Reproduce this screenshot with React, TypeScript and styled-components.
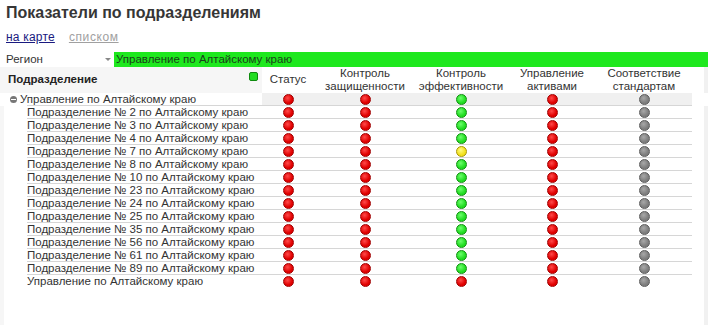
import styled, { createGlobalStyle } from 'styled-components';

const GlobalStyle = createGlobalStyle`
  html, body {
    margin: 0;
    padding: 0;
    background: #ffffff;
  }
  body {
    font-family: "Liberation Sans", Arial, sans-serif;
    font-size: 11px;
    color: #222;
  }
`;

const Page = styled.div`
  width: 708px;
  height: 325px;
  overflow: hidden;
  display: flex;
  flex-direction: column;
`;

const Title = styled.h1`
  margin: 0;
  padding: 3px 6px 0;
  height: 22px;
  box-sizing: border-box;
  font-family: "Liberation Sans", Arial, sans-serif;
  font-size: 16px;
  line-height: 20px;
  font-weight: bold;
  color: #363636;
`;

const Tabs = styled.div`
  display: flex;
  gap: 14px;
  padding: 8px 6px 0;
  height: 24px;
  box-sizing: border-box;
  line-height: 14px;
`;

const Tab = styled.a<{ $active?: boolean }>`
  color: ${(p) => (p.$active ? '#1a1a80' : '#a0a0a0')};
  text-decoration: underline;
  font-size: 12px;
  letter-spacing: ${(p) => (p.$active ? '0.2px' : '0.6px')};
  cursor: pointer;
`;

const FilterRow = styled.div`
  display: flex;
  height: 15px;
  margin-top: 6px;
  line-height: 15px;
`;

const Select = styled.div`
  width: 114px;
  padding-left: 6px;
  box-sizing: border-box;
  display: flex;
  justify-content: space-between;
  align-items: center;
  color: #333;
  font-size: 11.5px;
`;

const Arrow = styled.span`
  width: 0;
  height: 0;
  margin-right: 3px;
  border-left: 3px solid transparent;
  border-right: 3px solid transparent;
  border-top: 3px solid #888;
`;

const Selected = styled.div`
  flex: 1;
  background: #1ee81e;
  color: #1b3d1b;
  padding-left: 2px;
  font-size: 11.5px;
`;

const Table = styled.div`
  flex: 1;
  box-shadow: inset 4px 0 0 #f6f6f6, inset -4px 0 0 #f1f1f1;
`;

const cols = '262px 52px 102px 90px 92px 92px';

const HeadRow = styled.div`
  display: grid;
  grid-template-columns: ${cols};
  height: 26px;
`;

const HeadName = styled.div`
  background: #f6f6f6;
  display: flex;
  align-items: center;
  justify-content: space-between;
  padding: 0 4px 2px 8px;
  font-weight: bold;
  font-size: 11.5px;
  color: #222;
`;

const Square = styled.span`
  width: 7px;
  height: 7px;
  margin-top: -6px;
  border-radius: 2px;
  border: 1px solid #0e8a0e;
  background: #22dd22;
`;

const HeadCell = styled.div`
  display: flex;
  flex-direction: column;
  align-items: center;
  justify-content: center;
  text-align: center;
  line-height: 12.5px;
  font-size: 11.5px;
  color: #333;
  white-space: nowrap;
  padding-bottom: 1px;
`;

const Row = styled.div<{ $top?: boolean }>`
  display: grid;
  grid-template-columns: ${cols};
  height: 13px;
  line-height: 13px;
  position: relative;
  background: ${(p) =>
    p.$top ? 'linear-gradient(to right, #fff 262px, #f0f0f0 262px, #f0f0f0 692px, #fff 692px)' : 'transparent'};

  &:not(:last-child)::after {
    content: '';
    position: absolute;
    left: 27px;
    width: 665px;
    bottom: 0;
    height: 1px;
    background: #d6d6d6;
  }
`;

const Name = styled.div<{ $level: number }>`
  display: flex;
  align-items: center;
  gap: 3px;
  padding-left: ${(p) => (p.$level === 0 ? 10 : 27)}px;
  white-space: nowrap;
  font-size: 11.5px;
  color: #333;
`;

const Toggle = styled.span`
  width: 7px;
  height: 7px;
  border-radius: 50%;
  background: #777;
  position: relative;

  &::before {
    content: '';
    position: absolute;
    left: 1px;
    right: 1px;
    top: 3px;
    height: 1px;
    background: #fff;
  }
`;

const Cell = styled.div`
  display: flex;
  align-items: center;
  justify-content: center;
`;

const palette = {
  r: { fill: '#e00000', hi: '#ff4a4a', edge: '#a00000' },
  g: { fill: '#22dd22', hi: '#6cff6c', edge: '#0d8f0d' },
  y: { fill: '#f2e11e', hi: '#fffb80', edge: '#a89500' },
  s: { fill: '#7e7e7e', hi: '#a8a8a8', edge: '#5c5c5c' },
};

type Tone = keyof typeof palette;

const Dot = styled.span<{ $tone: Tone }>`
  width: 9px;
  height: 9px;
  border-radius: 50%;
  border: 1px solid ${(p) => palette[p.$tone].edge};
  background: radial-gradient(
    circle at 40% 35%,
    ${(p) => palette[p.$tone].hi} 0,
    ${(p) => palette[p.$tone].fill} 60%
  );
`;

const headers = [
  ['Статус'],
  ['Контроль', 'защищенности'],
  ['Контроль', 'эффективности'],
  ['Управление', 'активами'],
  ['Соответствие', 'стандартам'],
];

const units = ['2', '3', '4', '7', '8', '10', '23', '24', '25', '35', '56', '61', '89'];

const rows: { name: string; level: number; tones: Tone[] }[] = [
  { name: 'Управление по Алтайскому краю', level: 0, tones: ['r', 'r', 'g', 'r', 's'] },
  ...units.map((n) => ({
    name: `Подразделение № ${n} по Алтайскому краю`,
    level: 1,
    tones: ['r', 'r', n === '7' ? 'y' : 'g', 'r', 's'] as Tone[],
  })),
  { name: 'Управление по Алтайскому краю', level: 1, tones: ['r', 'r', 'r', 'r', 's'] },
];

function App() {
  return (
    <Page>
      <GlobalStyle />
      <Title>Показатели по подразделениям</Title>
      <Tabs>
        <Tab $active>на карте</Tab>
        <Tab>списком</Tab>
      </Tabs>
      <FilterRow>
        <Select>
          Регион
          <Arrow />
        </Select>
        <Selected>Управление по Алтайскому краю</Selected>
      </FilterRow>
      <Table>
        <HeadRow>
          <HeadName>
            Подразделение
            <Square />
          </HeadName>
          {headers.map((h) => (
            <HeadCell key={h.join()}>
              {h.map((line, i) => (
                <span key={i}>{line}</span>
              ))}
            </HeadCell>
          ))}
        </HeadRow>
        {rows.map((row, i) => (
          <Row key={i} $top={i === 0}>
            <Name $level={row.level}>
              {row.level === 0 && <Toggle />}
              {row.name}
            </Name>
            {row.tones.map((t, j) => (
              <Cell key={j}>
                <Dot $tone={t} />
              </Cell>
            ))}
          </Row>
        ))}
      </Table>
    </Page>
  );
}

export default App;
